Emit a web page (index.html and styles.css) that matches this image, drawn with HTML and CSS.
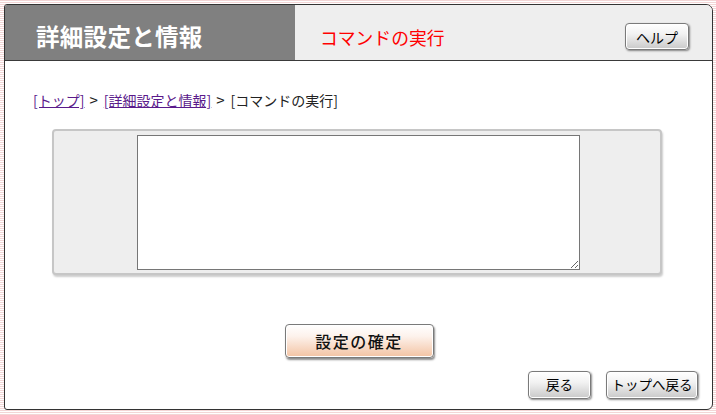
FILE: index.html
```html
<!DOCTYPE html>
<html lang="ja">
<head>
<meta charset="utf-8">
<title>コマンドの実行</title>
<link rel="stylesheet" href="styles.css">
</head>
<body>
<div class="frame">
  <div class="header">
    <div class="header-title">詳細設定と情報</div>
    <div class="header-sub">
      <span class="page-name">コマンドの実行</span>
      <button class="btn btn-help">ヘルプ</button>
    </div>
  </div>
  <div class="content">
    <div class="crumbs">
      <a href="#" class="crumb-link">[トップ]</a><span class="sep">&gt;</span><a href="#" class="crumb-link">[詳細設定と情報]</a><span class="sep">&gt;</span><span>[コマンドの実行]</span>
    </div>
    <div class="panel">
      <textarea class="cmd"></textarea>
    </div>
    <div class="confirm-row">
      <button class="btn-confirm">設定の確定</button>
    </div>
    <div class="nav-row">
      <button class="btn btn-back">戻る</button>
      <button class="btn btn-top">トップへ戻る</button>
    </div>
  </div>
</div>
</body>
</html>
```

FILE: styles.css
```css
html, body {
  margin: 0;
  padding: 0;
}
body {
  width: 716px;
  height: 415px;
  box-sizing: border-box;
  padding: 4px 0 0 4px;
  background: repeating-linear-gradient(to bottom, #f3d6d6 0px, #f3d6d6 1px, #ffffff 1px, #ffffff 2px);
  font-family: "Noto Sans CJK JP", "Noto Sans", sans-serif;
  overflow: hidden;
}
.frame {
  width: 709px;
  height: 406px;
  box-sizing: border-box;
  border: 1px solid #333;
  border-radius: 3px 7px 6px 3px;
  background: #fff;
  overflow: hidden;
  display: flex;
  flex-direction: column;
}
.header {
  display: flex;
  height: 55px;
  border-bottom: 1px solid #3a3a3a;
  flex: none;
}
.header-title {
  width: 290px;
  background: #808080;
  color: #fff;
  font-weight: bold;
  font-size: 23.5px;
  padding: 6px 0 0 31px;
  box-sizing: border-box;
  display: flex;
  align-items: center;
  letter-spacing: 0.3px;
}
.header-sub {
  flex: 1;
  background: #eeeeee;
  display: flex;
  align-items: center;
  justify-content: space-between;
  padding: 8px 23px 0 25px;
}
.page-name {
  color: #ff0000;
  font-size: 17.8px;
}
.btn {
  font-family: "Noto Sans CJK JP", "Noto Sans", sans-serif;
  font-size: 13.5px;
  color: #000;
  border: 1px solid #7a7a7a;
  border-radius: 4px;
  background: linear-gradient(to bottom, #ffffff 0%, #f2f2f2 40%, #c9c9c9 100%);
  box-shadow: inset 0 0 0 1px #ffffff, 1px 1px 2px rgba(0, 0, 0, 0.45);
  padding: 0;
  display: flex;
  align-items: center;
  justify-content: center;
  line-height: 1;
}
.btn-help {
  width: 64px;
  height: 27px;
  font-size: 14px;
}
.content {
  flex: 1;
  display: flex;
  flex-direction: column;
  padding: 29px 14px 10px 28px;
}
.crumbs {
  font-size: 14px;
  line-height: 20px;
  height: 20px;
  color: #222;
  white-space: nowrap;
}
.sep {
  margin: 0 6px 0 5px;
  font-size: 15px;
}
.crumb-link {
  color: #5a1a8b;
  text-decoration: underline;
}
.panel {
  margin: 19px 0 0 19px;
  width: 610px;
  height: 146px;
  box-sizing: border-box;
  background: #eeeeee;
  border: 2px solid #c6c6c6;
  border-radius: 4px;
  box-shadow: 1px 2px 2px rgba(0, 0, 0, 0.2);
  display: flex;
  justify-content: center;
  padding-top: 4px;
  padding-left: 3px;
}
.cmd {
  width: 443px;
  height: 135px;
  box-sizing: border-box;
  border: 1px solid #767676;
  background: #fff;
  margin: 0;
  padding: 2px;
  font-family: "Liberation Mono", monospace;
  font-size: 13px;
}
.confirm-row {
  display: flex;
  justify-content: center;
  margin-top: 49px;
  padding-right: 13px;
}
.btn-confirm {
  width: 149px;
  height: 34px;
  font-family: "Noto Sans CJK JP", "Noto Sans", sans-serif;
  font-size: 16px;
  font-weight: 500;
  letter-spacing: 1.5px;
  color: #111;
  border: 1px solid #7a7a7a;
  border-radius: 4px;
  background: linear-gradient(to bottom, #ffffff 0%, #fdf2ec 35%, #f3c3a3 100%);
  box-shadow: inset 0 0 0 1px #ffffff, 1px 2px 2px rgba(0, 0, 0, 0.45);
  padding: 0;
  display: flex;
  align-items: center;
  justify-content: center;
  line-height: 1;
}
.nav-row {
  display: flex;
  justify-content: flex-end;
  gap: 15px;
  margin-top: 13px;
}
.btn-back {
  width: 63px;
  height: 28px;
}
.btn-top {
  width: 92px;
  height: 28px;
}
```
